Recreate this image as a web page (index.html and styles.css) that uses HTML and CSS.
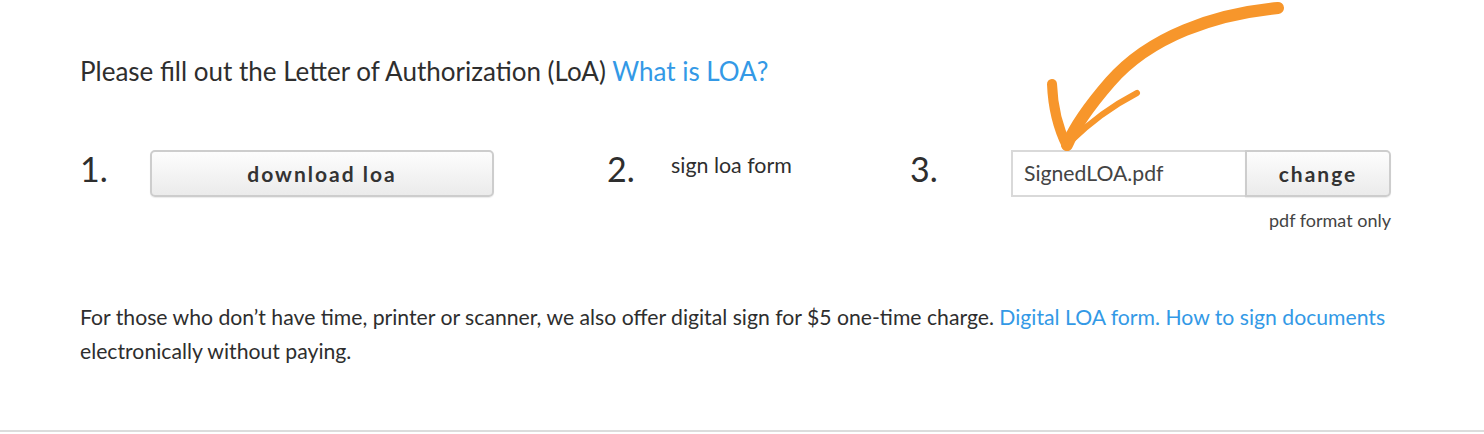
FILE: index.html
```html
<!DOCTYPE html>
<html lang="en">
<head>
<meta charset="utf-8">
<title>Letter of Authorization</title>
<link rel="stylesheet" href="styles.css">
</head>
<body>
<div class="page">
  <p class="title">Please fill out the Letter of Authorization (LoA) <a href="#" class="link">What is LOA?</a></p>

  <div class="steps">
    <div class="step step-one">
      <span class="num">1.</span>
      <button class="btn btn-download">download loa</button>
    </div>
    <div class="step step-two">
      <span class="num">2.</span>
      <span class="step-text">sign loa form</span>
    </div>
    <div class="step step-three">
      <span class="num">3.</span>
      <div class="upload">
        <div class="file-row">
          <div class="file-name">SignedLOA.pdf</div>
          <button class="btn btn-change">change</button>
        </div>
        <div class="hint">pdf format only</div>
      </div>
    </div>
  </div>

  <p class="note">For those who don’t have time, printer or scanner, we also offer digital sign for $5 one-time charge. <a href="#" class="link">Digital LOA form. How to sign documents</a> electronically without paying.</p>

  <svg class="arrow" width="260" height="160" viewBox="0 0 260 160" aria-hidden="true">
    <path d="M238,8 C175,14 110,36 70,82 C50,105 35,126 27,145" fill="none" stroke="#f7962b" stroke-width="12" stroke-linecap="round"/>
    <path d="M12,84 C13,110 19,130 27,146" fill="none" stroke="#f7962b" stroke-width="10" stroke-linecap="round"/>
    <path d="M97,93 C72,106 48,124 30,142" fill="none" stroke="#f7962b" stroke-width="6" stroke-linecap="round"/>
  </svg>
</div>
<div class="rule"></div>
</body>
</html>
```
FILE: styles.css
```css
html, body {
  margin: 0;
  padding: 0;
  background: #fff;
}
body {
  font-family: Lato, "Open Sans", sans-serif;
  color: #2e2e2e;
}
.page {
  position: relative;
  height: 430px;
  padding: 0 80px;
  box-sizing: border-box;
}
.link {
  color: #3399e6;
  text-decoration: none;
}
.title {
  margin: 0;
  padding-top: 55px;
  font-size: 26px;
  line-height: 32px;
}
.steps {
  display: flex;
  align-items: flex-start;
  margin-top: 63px;
}
.step {
  display: flex;
  align-items: flex-start;
}
.step-one { width: 527px; }
.step-two { width: 303px; }
.num {
  font-size: 34px;
  line-height: 38px;
  color: #2e2e2e;
}
.step-one .num { width: 70px; }
.step-two .num { width: 64px; }
.step-three .num { width: 101px; }
.btn {
  font-family: Lato, "Open Sans", sans-serif;
  font-weight: 700;
  font-size: 21px;
  letter-spacing: 2px;
  color: #333;
  background: linear-gradient(#fdfdfd, #ebebeb);
  border: 2px solid #cdcdcd;
  border-radius: 5px;
  height: 47px;
  padding: 0;
  box-shadow: 0 1px 1px rgba(0,0,0,0.08);
}
.btn-download {
  width: 344px;
}
.step-text {
  font-size: 21.4px;
  line-height: 30px;
}
.upload {
  display: flex;
  flex-direction: column;
  align-items: flex-end;
}
.file-row {
  display: flex;
}
.file-name {
  width: 234px;
  height: 47px;
  box-sizing: border-box;
  border: 2px solid #d9d9d9;
  border-right: none;
  padding-left: 11px;
  font-size: 21.2px;
  line-height: 43px;
  color: #444;
}
.btn-change {
  width: 146px;
  border-radius: 0 5px 5px 0;
}
.hint {
  margin-top: 12px;
  font-size: 18px;
  line-height: 22px;
  color: #444;
}
.note {
  margin: 69px 0 0;
  width: 1320px;
  font-size: 21.2px;
  line-height: 34px;
}
.arrow {
  position: absolute;
  left: 1040px;
  top: 0;
}
.rule {
  height: 2px;
  background: #dcdcdc;
}
```
